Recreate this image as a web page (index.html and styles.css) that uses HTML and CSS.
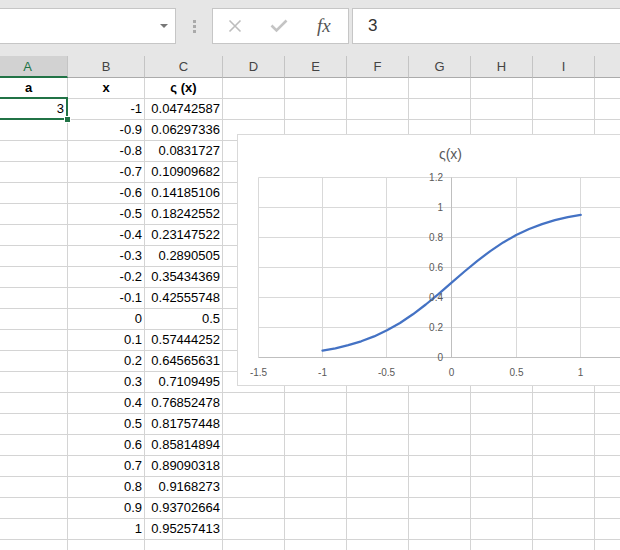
FILE: index.html
```html
<!DOCTYPE html>
<html>
<head>
<meta charset="utf-8">
<link rel="stylesheet" href="styles.css">
</head>
<body>
<div class="bar">
  <div class="namebox"><span class="drop"></span></div>
  <div class="grip"><i></i><i></i><i></i></div>
  <div class="funcs">
    <span class="slot"><svg width="14" height="14" viewBox="0 0 14 14"><path d="M1.5 1.5L12.5 12.5M12.5 1.5L1.5 12.5" stroke="#bdbdbd" stroke-width="1.6" fill="none"/></svg></span>
    <span class="slot"><svg width="18" height="14" viewBox="0 0 18 14"><path d="M1.5 6.5L6.5 11.5L16.5 1.5" stroke="#c4c4c4" stroke-width="2.6" fill="none"/></svg></span>
    <span class="slot fx">fx</span>
  </div>
  <div class="input">3</div>
</div>

<div class="sheet">
  <div class="h sel ca">A</div><div class="h">B</div><div class="h">C</div><div class="h">D</div><div class="h">E</div><div class="h">F</div><div class="h">G</div><div class="h">H</div><div class="h">I</div><div class="h"></div>

  <div class="c b ca">a</div><div class="c b">x</div><div class="c b">ς (x)</div><div class="c"></div><div class="c"></div><div class="c"></div><div class="c"></div><div class="c"></div><div class="c"></div><div class="c"></div>

  <div class="c n active">3</div><div class="c n">-1</div><div class="c n">0.04742587</div><div class="c"></div><div class="c"></div><div class="c"></div><div class="c"></div><div class="c"></div><div class="c"></div><div class="c"></div>
  <div class="c"></div><div class="c n">-0.9</div><div class="c n">0.06297336</div><div class="c"></div><div class="c"></div><div class="c"></div><div class="c"></div><div class="c"></div><div class="c"></div><div class="c"></div>
  <div class="c"></div><div class="c n">-0.8</div><div class="c n">0.0831727</div><div class="c"></div><div class="c"></div><div class="c"></div><div class="c"></div><div class="c"></div><div class="c"></div><div class="c"></div>
  <div class="c"></div><div class="c n">-0.7</div><div class="c n">0.10909682</div><div class="c"></div><div class="c"></div><div class="c"></div><div class="c"></div><div class="c"></div><div class="c"></div><div class="c"></div>
  <div class="c"></div><div class="c n">-0.6</div><div class="c n">0.14185106</div><div class="c"></div><div class="c"></div><div class="c"></div><div class="c"></div><div class="c"></div><div class="c"></div><div class="c"></div>
  <div class="c"></div><div class="c n">-0.5</div><div class="c n">0.18242552</div><div class="c"></div><div class="c"></div><div class="c"></div><div class="c"></div><div class="c"></div><div class="c"></div><div class="c"></div>
  <div class="c"></div><div class="c n">-0.4</div><div class="c n">0.23147522</div><div class="c"></div><div class="c"></div><div class="c"></div><div class="c"></div><div class="c"></div><div class="c"></div><div class="c"></div>
  <div class="c"></div><div class="c n">-0.3</div><div class="c n">0.2890505</div><div class="c"></div><div class="c"></div><div class="c"></div><div class="c"></div><div class="c"></div><div class="c"></div><div class="c"></div>
  <div class="c"></div><div class="c n">-0.2</div><div class="c n">0.35434369</div><div class="c"></div><div class="c"></div><div class="c"></div><div class="c"></div><div class="c"></div><div class="c"></div><div class="c"></div>
  <div class="c"></div><div class="c n">-0.1</div><div class="c n">0.42555748</div><div class="c"></div><div class="c"></div><div class="c"></div><div class="c"></div><div class="c"></div><div class="c"></div><div class="c"></div>
  <div class="c"></div><div class="c n">0</div><div class="c n">0.5</div><div class="c"></div><div class="c"></div><div class="c"></div><div class="c"></div><div class="c"></div><div class="c"></div><div class="c"></div>
  <div class="c"></div><div class="c n">0.1</div><div class="c n">0.57444252</div><div class="c"></div><div class="c"></div><div class="c"></div><div class="c"></div><div class="c"></div><div class="c"></div><div class="c"></div>
  <div class="c"></div><div class="c n">0.2</div><div class="c n">0.64565631</div><div class="c"></div><div class="c"></div><div class="c"></div><div class="c"></div><div class="c"></div><div class="c"></div><div class="c"></div>
  <div class="c"></div><div class="c n">0.3</div><div class="c n">0.7109495</div><div class="c"></div><div class="c"></div><div class="c"></div><div class="c"></div><div class="c"></div><div class="c"></div><div class="c"></div>
  <div class="c"></div><div class="c n">0.4</div><div class="c n">0.76852478</div><div class="c"></div><div class="c"></div><div class="c"></div><div class="c"></div><div class="c"></div><div class="c"></div><div class="c"></div>
  <div class="c"></div><div class="c n">0.5</div><div class="c n">0.81757448</div><div class="c"></div><div class="c"></div><div class="c"></div><div class="c"></div><div class="c"></div><div class="c"></div><div class="c"></div>
  <div class="c"></div><div class="c n">0.6</div><div class="c n">0.85814894</div><div class="c"></div><div class="c"></div><div class="c"></div><div class="c"></div><div class="c"></div><div class="c"></div><div class="c"></div>
  <div class="c"></div><div class="c n">0.7</div><div class="c n">0.89090318</div><div class="c"></div><div class="c"></div><div class="c"></div><div class="c"></div><div class="c"></div><div class="c"></div><div class="c"></div>
  <div class="c"></div><div class="c n">0.8</div><div class="c n">0.9168273</div><div class="c"></div><div class="c"></div><div class="c"></div><div class="c"></div><div class="c"></div><div class="c"></div><div class="c"></div>
  <div class="c"></div><div class="c n">0.9</div><div class="c n">0.93702664</div><div class="c"></div><div class="c"></div><div class="c"></div><div class="c"></div><div class="c"></div><div class="c"></div><div class="c"></div>
  <div class="c"></div><div class="c n">1</div><div class="c n">0.95257413</div><div class="c"></div><div class="c"></div><div class="c"></div><div class="c"></div><div class="c"></div><div class="c"></div><div class="c"></div>
  <div class="c"></div><div class="c"></div><div class="c"></div><div class="c"></div><div class="c"></div><div class="c"></div><div class="c"></div><div class="c"></div><div class="c"></div><div class="c"></div>
</div>

<div class="chart">
  <svg width="383" height="250" viewBox="0 0 383 250">
    <text class="title" x="212.5" y="24" text-anchor="middle">ς(x)</text>
    <g stroke="#d9d9d9" stroke-width="1" fill="none">
      <path d="M20.5 42.5H383M20.5 72.5H383M20.5 102.5H383M20.5 132.5H383M20.5 162.5H383M20.5 192.5H383"/>
      <path d="M20.5 42.5V222.5M84.5 42.5V222.5M148.5 42.5V222.5M278.5 42.5V222.5M342.5 42.5V222.5"/>
    </g>
    <g stroke="#bfbfbf" stroke-width="1" fill="none">
      <path d="M20.5 222.5H383M213.5 42.5V222.5"/>
    </g>
    <polyline fill="none" stroke="#4472c4" stroke-width="2.25" stroke-linejoin="round" stroke-linecap="round"
      points="84.5,215.6 97.4,213.3 110.3,210.2 123.2,206.3 136.1,201.4 149,195.3 162,188 174.9,179.3 187.8,169.5 200.7,158.9 213.6,147.7 226.5,136.5 239.4,125.8 252.3,116.1 265.2,107.4 278.2,100.1 291.1,94 304,89.1 316.9,85.2 329.8,82.2 342.7,79.8"/>
    <g class="lbl" text-anchor="end">
      <text x="205" y="46">1.2</text>
      <text x="205" y="76">1</text>
      <text x="205" y="106">0.8</text>
      <text x="205" y="136">0.6</text>
      <text x="205" y="166">0.4</text>
      <text x="205" y="196">0.2</text>
      <text x="205" y="226">0</text>
    </g>
    <g class="lbl" text-anchor="middle">
      <text x="20.5" y="240.5">-1.5</text>
      <text x="84.5" y="240.5">-1</text>
      <text x="148.5" y="240.5">-0.5</text>
      <text x="213.5" y="240.5">0</text>
      <text x="278.5" y="240.5">0.5</text>
      <text x="342.5" y="240.5">1</text>
    </g>
  </svg>
</div>
</body>
</html>
```

FILE: styles.css
```css
html, body {
  margin: 0;
  padding: 0;
}
body {
  width: 620px;
  height: 550px;
  overflow: hidden;
  position: relative;
  background: #e6e6e6;
  font-family: "Liberation Sans", Arial, sans-serif;
  color: #000;
}

/* formula bar */
.bar {
  height: 56px;
  box-sizing: border-box;
  padding-top: 8px;
  display: flex;
  align-items: flex-start;
}
.namebox {
  width: 176px;
  height: 36px;
  box-sizing: border-box;
  border: 1px solid #c6c6c6;
  border-left: 0;
  background: #fff;
  display: flex;
  align-items: center;
  justify-content: flex-end;
  padding-right: 7px;
}
.drop {
  width: 0;
  height: 0;
  border-left: 4px solid transparent;
  border-right: 4px solid transparent;
  border-top: 4px solid #777;
}
.grip {
  width: 36px;
  height: 36px;
  display: flex;
  flex-direction: column;
  align-items: center;
  justify-content: center;
  gap: 2px;
}
.grip i {
  display: block;
  width: 3px;
  height: 3px;
  background: #aaaaaa;
}
.funcs {
  width: 137px;
  height: 36px;
  box-sizing: border-box;
  border: 1px solid #c6c6c6;
  background: #fff;
  display: flex;
  align-items: center;
}
.slot {
  width: 45px;
  display: flex;
  justify-content: center;
  align-items: center;
}
.fx {
  font-family: "Liberation Serif", "DejaVu Serif", serif;
  font-style: italic;
  font-size: 19px;
  color: #555;
  padding-right: 2px;
}
.input {
  flex: 1;
  margin-left: 3px;
  height: 36px;
  box-sizing: border-box;
  border: 1px solid #c6c6c6;
  border-right: 0;
  background: #fff;
  padding-left: 15px;
  font-size: 17px;
  line-height: 34px;
  color: #333;
}

/* sheet */
.sheet {
  display: grid;
  grid-template-columns: 68px 77px 78px repeat(6, 62px) 25px;
  grid-template-rows: 22px;
  grid-auto-rows: 21px;
  background: #fff;
}
.h {
  box-sizing: border-box;
  background: #e6e6e6;
  border-right: 1px solid #c4c4c4;
  border-bottom: 1px solid #ababab;
  text-align: center;
  font-size: 13px;
  line-height: 21px;
  color: #444;
}
.h.sel {
  background: #d2d2d2;
  color: #217346;
  border-bottom: 2px solid #217346;
}
.c {
  box-sizing: border-box;
  background: #fff;
  border-right: 1px solid #d4d4d4;
  border-bottom: 1px solid #d4d4d4;
  font-size: 13px;
  line-height: 20px;
  padding: 0 2px;
  white-space: nowrap;
}
.h:nth-child(10n), .c:nth-child(10n) {
  border-right: 0;
}
.ca {
  padding-right: 12px;
}
.c.b {
  font-weight: bold;
  text-align: center;
}
.c.n {
  text-align: right;
}
.c.active {
  position: relative;
  padding-right: 3px;
}
.c.active::after {
  content: "";
  position: absolute;
  top: -2px;
  left: -2px;
  right: -1px;
  bottom: -1px;
  border: 2px solid #217346;
}
.c.active::before {
  content: "";
  position: absolute;
  right: -4px;
  bottom: -4px;
  width: 5px;
  height: 5px;
  background: #217346;
  border: 1px solid #fff;
  z-index: 1;
}

/* chart */
.chart {
  position: absolute;
  left: 237px;
  top: 134px;
  width: 383px;
  height: 252px;
  box-sizing: border-box;
  border: 1px solid #d9d9d9;
  border-right: 0;
  background: #fff;
}
.chart svg {
  display: block;
}
.title {
  font-family: "Liberation Sans", Arial, sans-serif;
  font-size: 14px;
  fill: #595959;
}
.lbl text {
  font-family: "Liberation Sans", Arial, sans-serif;
  font-size: 10px;
  fill: #595959;
}
```
